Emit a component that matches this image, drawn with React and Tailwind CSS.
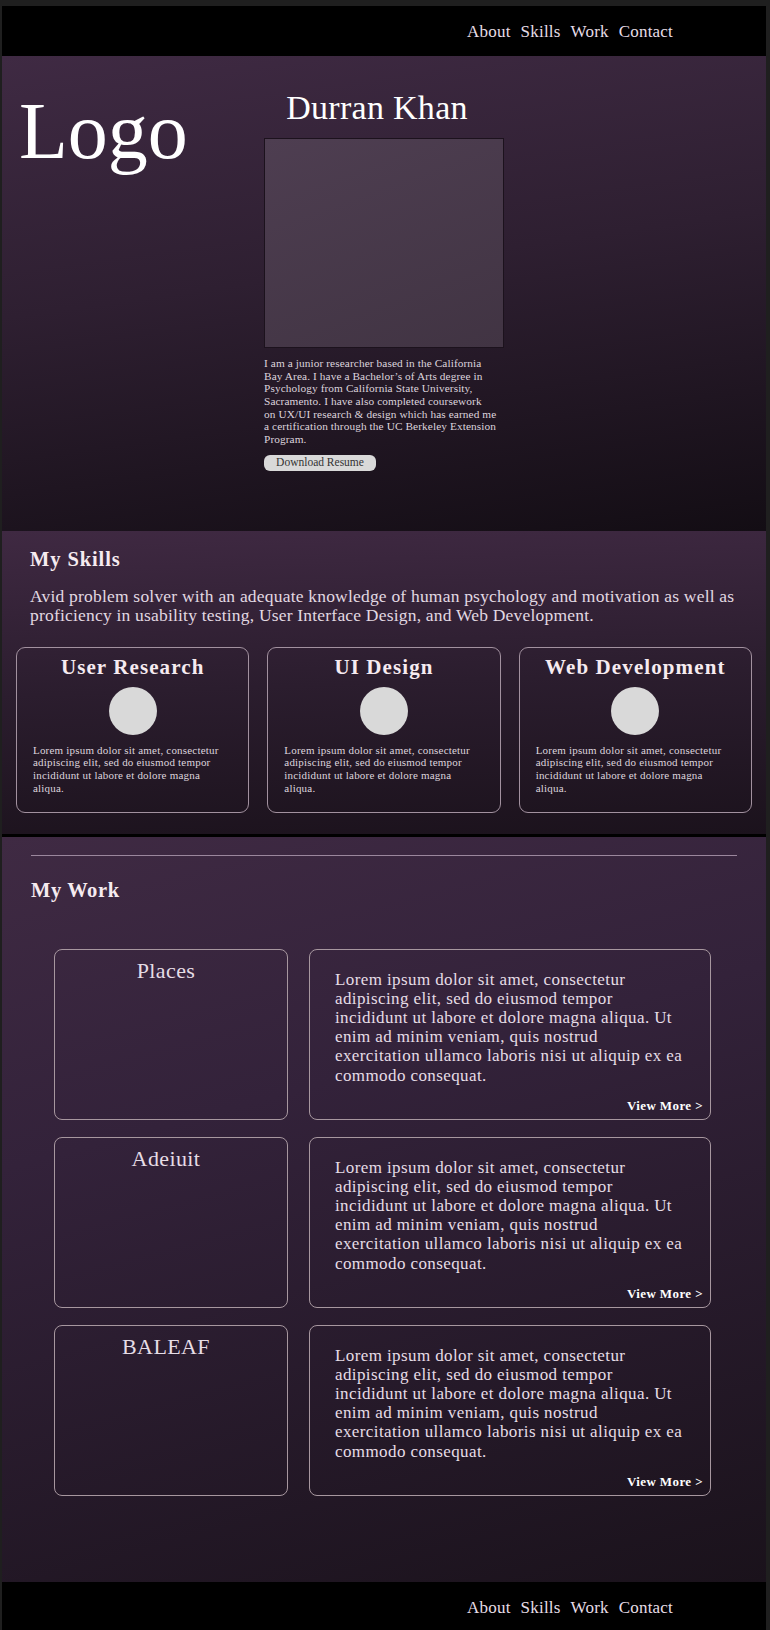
const navItems = ['About', 'Skills', 'Work', 'Contact']

const bio = [
  'I am a junior researcher based in the California',
  'Bay Area. I have a Bachelor’s of Arts degree in',
  'Psychology from California State University,',
  'Sacramento. I have also completed coursework',
  'on UX/UI research & design which has earned me',
  'a certification through the UC Berkeley Extension',
  'Program.',
]

const skillText = [
  'Lorem ipsum dolor sit amet, consectetur',
  'adipiscing elit, sed do eiusmod tempor',
  'incididunt ut labore et dolore magna',
  'aliqua.',
]

const workText = [
  'Lorem ipsum dolor sit amet, consectetur',
  'adipiscing elit, sed do eiusmod tempor',
  'incididunt ut labore et dolore magna aliqua. Ut',
  'enim ad minim veniam, quis nostrud',
  'exercitation ullamco laboris nisi ut aliquip ex ea',
  'commodo consequat.',
]

const skills = ['User Research', 'UI Design', 'Web Development']
const projects = ['Places', 'Adeiuit', 'BALEAF']

function NavBar() {
  return (
    <nav className="h-[50px] bg-black flex items-center justify-end pr-[93px]">
      <ul className="flex gap-[10px] text-[17px] leading-none tracking-[0.2px] text-[#e6dde6]">
        {navItems.map((item) => (
          <li key={item}>{item}</li>
        ))}
      </ul>
    </nav>
  )
}

function Lines({ lines }) {
  return lines.map((line) => (
    <span key={line} className="block whitespace-nowrap">
      {line}
    </span>
  ))
}

export default function App() {
  return (
    <div
      className="bg-[#1f1f1f] pt-[6px] pl-[2px] pr-[4px]"
      style={{ fontFamily: '"Liberation Serif", "Times New Roman", serif' }}
    >
      <NavBar />

      {/* hero */}
      <section className="h-[475px] flex pl-[17px] pt-[35px] bg-[linear-gradient(172deg,#3f2a43_0%,#2e1f31_45%,#130d14_100%)]">
        <div className="w-[245px] text-[80px] leading-none text-white">Logo</div>
        <div className="w-[240px] flex flex-col">
          <h1 className="text-[34px] leading-none tracking-[0.3px] text-white text-center pr-[14px]">Durran Khan</h1>
          <div className="mt-[13px] h-[210px] border border-[#1c121d] bg-[linear-gradient(160deg,#4e3e51,#413443)]" />
          <p className="mt-[9px] text-[11.3px] leading-[12.67px] tracking-[0.1px] text-[#ddd4dd]">
            <Lines lines={bio} />
          </p>
          <button className="mt-[9px] w-[112px] h-[16px] rounded-[6px] bg-[#d9d9d9] text-[11.5px] leading-none text-[#333]">
            Download Resume
          </button>
        </div>
      </section>

      {/* skills */}
      <section className="h-[306px] border-b-[3px] border-black pt-[18px] bg-[linear-gradient(178deg,#3f2942_0%,#2b1d2e_50%,#1b121c_100%)]">
        <h2 className="pl-[28px] text-[20.5px] font-bold leading-none tracking-[0.9px] text-[#f6ebf0]">My Skills</h2>
        <p className="mt-[17px] pl-[28px] text-[17.5px] leading-[19px] tracking-[0.2px] text-[#e2d9e2]">
          <Lines
            lines={[
              'Avid problem solver with an adequate knowledge of human psychology and motivation as well as',
              'proficiency in usability testing, User Interface Design, and Web Development.',
            ]}
          />
        </p>
        <div className="mt-[22px] px-[14px] grid grid-cols-3 gap-[18px] w-[764px]">
          {skills.map((title) => (
            <div
              key={title}
              className="h-[166px] rounded-[9px] border border-[#a2919f] px-[16px] pt-[9px] flex flex-col items-center"
            >
              <h3 className="text-[21px] font-bold leading-none tracking-[1.1px] text-[#f6ebf0]">{title}</h3>
              <div className="mt-[9px] w-[48px] h-[48px] rounded-full bg-[#d9d9d9]" />
              <p className="mt-[9px] self-stretch text-[11px] leading-[12.8px] tracking-[0.2px] text-[#ddd4dd]">
                <Lines lines={skillText} />
              </p>
            </div>
          ))}
        </div>
      </section>

      {/* work */}
      <section className="h-[745px] px-[29px] pt-[18px] bg-[linear-gradient(165deg,#3f2a43_0%,#33223a_35%,#1a121b_100%)]">
        <hr className="border-0 h-px bg-[#9b879d]" />
        <h2 className="mt-[24px] text-[20.5px] font-bold leading-none tracking-[0.6px] text-[#f6ebf0]">My Work</h2>
        <div className="mt-[48px] pl-[23px] flex flex-col gap-[17px]">
          {projects.map((name) => (
            <div key={name} className="flex gap-[21px] h-[171px]">
              <div className="w-[234px] rounded-[8px] border border-[#a7979f] pt-[10px] pr-[10px] text-center text-[22px] leading-none tracking-[0.4px] text-[#e6dde6]">
                {name}
              </div>
              <div className="w-[402px] rounded-[8px] border border-[#a7979f] pl-[25px] pr-[7px] pt-[20px] pb-[7px] flex flex-col justify-between">
                <p className="text-[17px] leading-[19.2px] tracking-[0.4px] text-[#e6dde6]">
                  <Lines lines={workText} />
                </p>
                <span className="self-end text-[13px] font-bold leading-none tracking-[0.4px] text-white">View More &gt;</span>
              </div>
            </div>
          ))}
        </div>
      </section>

      <NavBar />
    </div>
  )
}
